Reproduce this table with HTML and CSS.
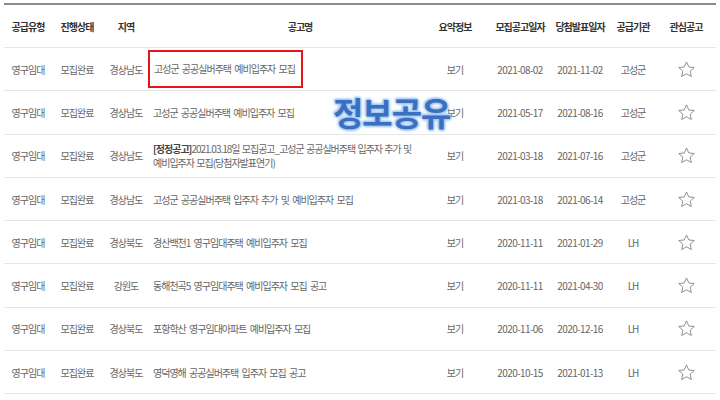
FILE: index.html
```html
<!DOCTYPE html>
<html>
<head>
    <title>공고 목록</title>
    <link rel="stylesheet" href="styles.css">
</head>
<body>
    <div class="board">
        <table class="notice-table">
            <colgroup>
                <col class="c-type">
                <col class="c-state">
                <col class="c-area">
                <col class="c-title">
                <col class="c-info">
                <col class="c-date">
                <col class="c-date2">
                <col class="c-org">
                <col class="c-fav">
            </colgroup>
            <thead>
                <tr>
                    <th>공급유형</th>
                    <th>진행상태</th>
                    <th>지역</th>
                    <th class="th-title">공고명</th>
                    <th>요약정보</th>
                    <th>모집공고일자</th>
                    <th>당첨발표일자</th>
                    <th>공급기관</th>
                    <th>관심공고</th>
                </tr>
            </thead>
            <tbody>
                <tr>
                    <td>영구임대</td><td>모집완료</td><td>경상남도</td>
                    <td class="title"><span class="highlight">고성군 공공실버주택 예비입주자 모집</span></td>
                    <td>보기</td><td class="num">2021-08-02</td><td class="num">2021-11-02</td><td>고성군</td>
                    <td><svg class="star" viewBox="0 0 24 24"><path d="M12 2.5l2.9 6.3 6.9.7-5.2 4.6 1.5 6.8L12 17.4l-6.1 3.5 1.5-6.8-5.2-4.6 6.9-.7z"/></svg></td>
                </tr>
                <tr>
                    <td>영구임대</td><td>모집완료</td><td>경상남도</td>
                    <td class="title">고성군 공공실버주택 예비입주자 모집</td>
                    <td>보기</td><td class="num">2021-05-17</td><td class="num">2021-08-16</td><td>고성군</td>
                    <td><svg class="star" viewBox="0 0 24 24"><path d="M12 2.5l2.9 6.3 6.9.7-5.2 4.6 1.5 6.8L12 17.4l-6.1 3.5 1.5-6.8-5.2-4.6 6.9-.7z"/></svg></td>
                </tr>
                <tr>
                    <td>영구임대</td><td>모집완료</td><td>경상남도</td>
                    <td class="title two-line"><b>[정정공고]</b>2021.03.18일 모집공고_고성군 공공실버주택 입주자 추가 및<br>예비입주자 모집(당첨자발표연기)</td>
                    <td>보기</td><td class="num">2021-03-18</td><td class="num">2021-07-16</td><td>고성군</td>
                    <td><svg class="star" viewBox="0 0 24 24"><path d="M12 2.5l2.9 6.3 6.9.7-5.2 4.6 1.5 6.8L12 17.4l-6.1 3.5 1.5-6.8-5.2-4.6 6.9-.7z"/></svg></td>
                </tr>
                <tr>
                    <td>영구임대</td><td>모집완료</td><td>경상남도</td>
                    <td class="title">고성군 공공실버주택 입주자 추가 및 예비입주자 모집</td>
                    <td>보기</td><td class="num">2021-03-18</td><td class="num">2021-06-14</td><td>고성군</td>
                    <td><svg class="star" viewBox="0 0 24 24"><path d="M12 2.5l2.9 6.3 6.9.7-5.2 4.6 1.5 6.8L12 17.4l-6.1 3.5 1.5-6.8-5.2-4.6 6.9-.7z"/></svg></td>
                </tr>
                <tr>
                    <td>영구임대</td><td>모집완료</td><td>경상북도</td>
                    <td class="title">경산백천1 영구임대주택 예비입주자 모집</td>
                    <td>보기</td><td class="num">2020-11-11</td><td class="num">2021-01-29</td><td>LH</td>
                    <td><svg class="star" viewBox="0 0 24 24"><path d="M12 2.5l2.9 6.3 6.9.7-5.2 4.6 1.5 6.8L12 17.4l-6.1 3.5 1.5-6.8-5.2-4.6 6.9-.7z"/></svg></td>
                </tr>
                <tr>
                    <td>영구임대</td><td>모집완료</td><td>강원도</td>
                    <td class="title">동해천곡5 영구임대주택 예비입주자 모집 공고</td>
                    <td>보기</td><td class="num">2020-11-11</td><td class="num">2021-04-30</td><td>LH</td>
                    <td><svg class="star" viewBox="0 0 24 24"><path d="M12 2.5l2.9 6.3 6.9.7-5.2 4.6 1.5 6.8L12 17.4l-6.1 3.5 1.5-6.8-5.2-4.6 6.9-.7z"/></svg></td>
                </tr>
                <tr>
                    <td>영구임대</td><td>모집완료</td><td>경상북도</td>
                    <td class="title">포항학산 영구임대아파트 예비입주자 모집</td>
                    <td>보기</td><td class="num">2020-11-06</td><td class="num">2020-12-16</td><td>LH</td>
                    <td><svg class="star" viewBox="0 0 24 24"><path d="M12 2.5l2.9 6.3 6.9.7-5.2 4.6 1.5 6.8L12 17.4l-6.1 3.5 1.5-6.8-5.2-4.6 6.9-.7z"/></svg></td>
                </tr>
                <tr>
                    <td>영구임대</td><td>모집완료</td><td>경상북도</td>
                    <td class="title">영덕영해 공공실버주택 입주자 모집 공고</td>
                    <td>보기</td><td class="num">2020-10-15</td><td class="num">2021-01-13</td><td>LH</td>
                    <td><svg class="star" viewBox="0 0 24 24"><path d="M12 2.5l2.9 6.3 6.9.7-5.2 4.6 1.5 6.8L12 17.4l-6.1 3.5 1.5-6.8-5.2-4.6 6.9-.7z"/></svg></td>
                </tr>
            </tbody>
        </table>
        <div class="watermark">정보공유</div>
    </div>
</body>
</html>
```

FILE: styles.css
```css
body {
    margin: 0;
    background: #fff;
    font-family: "Noto Sans CJK KR", "Noto Sans", sans-serif;
}
.board {
    position: relative;
    padding: 3px 4px 0 4px;
}
.notice-table {
    width: 712px;
    table-layout: fixed;
    border-collapse: collapse;
    border-top: 2px solid #8c8c8c;
}
.c-type { width: 48px; }
.c-state { width: 50px; }
.c-area { width: 48px; }
.c-title { width: 270px; }
.c-info { width: 70px; }
.c-date { width: 60px; }
.c-date2 { width: 60px; }
.c-org { width: 46px; }
.c-fav { width: 60px; }

th, td {
    padding: 0;
    text-align: center;
    border-bottom: 1px solid #e6e6e6;
    font-size: 10px;
    letter-spacing: -1px;
    word-spacing: 2px;
    white-space: nowrap;
}
th {
    height: 42px;
    color: #333;
    font-weight: bold;
}
td {
    height: 42.3px;
    color: #666;
}
.th-title {
    padding-left: 30px;
}
td.title {
    text-align: left;
    padding-left: 3px;
}
td.two-line {
    line-height: 13.5px;
    word-spacing: 1px;
}
td.title b {
    color: #444;
}
td.num {
    letter-spacing: -0.6px;
}
.highlight {
    display: inline-block;
    margin-left: -5px;
    padding: 9px 6px 10px 4px;
    border: 2px solid #e8141c;
}
.star {
    width: 19px;
    height: 19px;
    vertical-align: middle;
    fill: none;
    stroke: #8a8a8a;
    stroke-width: 1.2;
    stroke-linejoin: round;
}
.watermark {
    position: absolute;
    left: 333px;
    top: 88px;
    font-size: 33px;
    font-weight: bold;
    letter-spacing: -1px;
    color: #3a6fc2;
    text-shadow: 0 0 2px #a3c8f2, 0 0 3px #a3c8f2, 0 0 4px #a3c8f2, 1px 1px 2px #a3c8f2, -1px -1px 2px #a3c8f2;
}
```
